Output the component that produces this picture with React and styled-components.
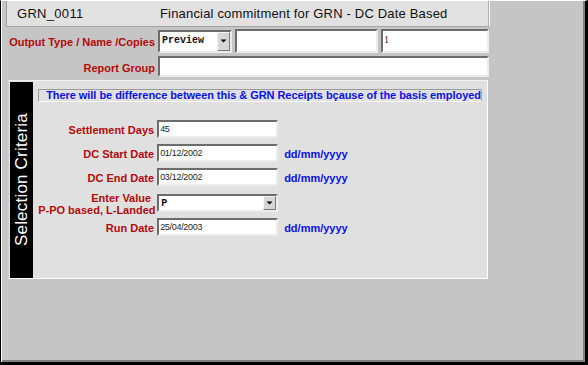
import React from 'react';
import styled, { createGlobalStyle } from 'styled-components';

const Global = createGlobalStyle`
  html, body { margin: 0; padding: 0; background: #c5c5c5; }
  body { font-family: "Liberation Sans", Arial, sans-serif; }
  * { box-sizing: border-box; }
`;

const Window = styled.div`
  width: 588px;
  height: 365px;
  background: #c5c5c5;
  border-top: 1px solid #ffffff;
  border-left: 1px solid #000000;
  border-right: 3px solid #000000;
  border-bottom: 3px solid #000000;
  box-shadow: inset 1px 0 0 #ffffff, inset -2px -2px 0 #808080;
  padding-left: 5px;
  display: flex;
  flex-direction: column;
  align-items: flex-start;
`;

const Header = styled.div`
  width: 484px;
  height: 26px;
  background: #e1e1e1;
  border-left: 1px solid #9c9c9c;
  border-right: 1px solid #f6f6f6;
  border-bottom: 1px solid #a4a4a4;
  box-shadow: inset -1px 0 0 #b0b0b0;
  display: grid;
  grid-template-columns: 143px 1fr;
  align-items: center;
  padding-left: 10px;
  font-size: 13px;
  color: #111111;
`;

const HeaderText = styled.span`
  letter-spacing: ${p => p.$ls || 0}px;
  white-space: nowrap;
`;

const TopRow = styled.div`
  display: grid;
  grid-template-columns: ${p => p.$cols};
  column-gap: 3px;
  align-items: center;
  height: ${p => p.$h}px;
  margin-top: ${p => p.$mt}px;
`;

const Label = styled.div`
  color: #b40a0a;
  font-weight: bold;
  font-size: 11px;
  line-height: ${p => p.$lh || 12}px;
  text-align: right;
  white-space: nowrap;
  padding-top: ${p => p.$pt || 0}px;
  align-self: ${p => p.$self || 'center'};
`;

const Pad = styled.span`
  margin-right: ${p => p.$r}px;
`;

const Field = styled.div`
  height: ${p => p.$h}px;
  width: ${p => p.$w}px;
  background: #ffffff;
  border-top: 2px solid #6c6c6c;
  border-left: 2px solid #6c6c6c;
  border-right: 2px solid #ececec;
  border-bottom: 2px solid #ececec;
  padding: ${p => p.$pt || 2}px 0 0 1px;
  font-family: ${p => p.$font || '"Liberation Sans", Arial, sans-serif'};
  font-size: ${p => p.$fs || 9}px;
  font-weight: ${p => (p.$bold ? 'bold' : 'normal')};
  letter-spacing: ${p => p.$ls || 0}px;
  line-height: 11px;
  color: #262626;
  white-space: nowrap;
  overflow: hidden;
  align-self: ${p => p.$self || 'center'};
  margin-top: ${p => p.$mtop || 0}px;
`;

const SelectBox = styled(Field)`
  display: flex;
  padding: 0;
`;

const SelectValue = styled.div`
  flex: 1;
  padding: ${p => p.$pt}px 0 0 2px;
  font-family: "Liberation Mono", "Courier New", monospace;
  font-size: 10px;
  font-weight: bold;
  color: #111111;
`;

const DropButton = styled.div`
  width: 13px;
  background: #d6d6d6;
  border-top: 1px solid #f4f4f4;
  border-left: 1px solid #f4f4f4;
  border-right: 1px solid #7a7a7a;
  border-bottom: 1px solid #7a7a7a;
  display: flex;
  align-items: center;
  justify-content: center;
`;

const Panel = styled.div`
  margin-top: 3px;
  margin-left: 2px;
  width: 480px;
  height: 199px;
  background: #e0e0e0;
  border-top: 1px solid #f2f2f2;
  border-left: 1px solid #cfcfcf;
  border-right: 1px solid #ffffff;
  border-bottom: 1px solid #ffffff;
  padding: 1px;
  display: flex;
`;

const SideBar = styled.div`
  width: 24px;
  height: 196px;
  background: #000000;
  display: flex;
  align-items: center;
  justify-content: center;
`;

const SideText = styled.span`
  writing-mode: vertical-rl;
  transform: rotate(180deg);
  color: #ffffff;
  font-size: 17px;
  letter-spacing: 0.2px;
  white-space: nowrap;
`;

const PanelBody = styled.div`
  flex: 1;
  padding: 7px 4px 0 5px;
  display: flex;
  flex-direction: column;
`;

const Notice = styled.div`
  height: 13px;
  border-top: 1px solid #9a9a9a;
  border-left: 1px solid #9a9a9a;
  border-right: 1px solid #a8a8a8;
  border-bottom: 1px solid #f8f8f8;
  padding-left: 7px;
  color: #0a12e8;
  font-weight: bold;
  font-size: 11px;
  line-height: 11px;
  white-space: nowrap;
  letter-spacing: -0.05px;
`;

const FieldRow = styled.div`
  display: grid;
  grid-template-columns: 116px 121px auto;
  column-gap: 3px;
  align-items: center;
  margin-top: ${p => p.$mt}px;
`;

const Hint = styled.span`
  color: #0a12e8;
  font-weight: bold;
  font-size: 11px;
  margin-left: 3px;
  padding-top: 2px;
  white-space: nowrap;
`;

const Arrow = () => (
  <svg width="7" height="4" viewBox="0 0 7 4">
    <path d="M0.5 0.5 H6.5 L3.5 3.5 Z" fill="#000" />
  </svg>
);

const serif = '"Liberation Serif", "Times New Roman", serif';

const dateFields = [
  { label: 'Settlement Days', value: '45', mt: 18, hint: false },
  { label: 'DC Start Date', value: '01/12/2002', mt: 6, hint: true },
  { label: 'DC End Date', value: '03/12/2002', mt: 6, hint: true },
];

export default function App() {
  return (
    <>
      <Global />
      <Window>
        <Header>
          <HeaderText $ls={0.3}>GRN_0011</HeaderText>
          <HeaderText $ls={0.18}>Financial commitment for GRN - DC Date Based</HeaderText>
        </Header>

        <TopRow $cols="149px 74px 143px 108px" $h={24} $mt={2}>
          <Label $pt={2}>Output Type / Name /Copies</Label>
          <SelectBox $h={23} $w={74}>
            <SelectValue $pt={3}>Preview</SelectValue>
            <DropButton>
              <Arrow />
            </DropButton>
          </SelectBox>
          <Field $h={24} $w={143} />
          <Field $h={24} $w={108} $font={serif} $fs={10} $pt={3}>1</Field>
        </TopRow>

        <TopRow $cols="149px 331px" $h={21} $mt={3}>
          <Label $pt={2}>Report Group</Label>
          <Field $h={21} $w={331} />
        </TopRow>

        <Panel>
          <SideBar>
            <SideText>Selection Criteria</SideText>
          </SideBar>
          <PanelBody>
            <Notice>There will be difference between this &amp; GRN Receipts bçause of the basis employed</Notice>

            {dateFields.map(f => (
              <FieldRow key={f.label} $mt={f.mt}>
                <Label $pt={2}>{f.label}</Label>
                <Field $h={18} $w={121} $ls={-0.3}>{f.value}</Field>
                {f.hint ? <Hint>dd/mm/yyyy</Hint> : <span />}
              </FieldRow>
            ))}

            <FieldRow $mt={6}>
              <Label $lh={12}>
                <Pad $r={3}>Enter Value</Pad>
                <br />
                P-PO based, L-Landed
              </Label>
              <SelectBox $h={18} $w={121} $self="start" $mtop={2}>
                <SelectValue $pt={2}>P</SelectValue>
                <DropButton>
                  <Arrow />
                </DropButton>
              </SelectBox>
              <span />
            </FieldRow>

            <FieldRow $mt={2}>
              <Label $pt={2}>Run Date</Label>
              <Field $h={18} $w={121} $ls={-0.3}>25/04/2003</Field>
              <Hint>dd/mm/yyyy</Hint>
            </FieldRow>
          </PanelBody>
        </Panel>
      </Window>
    </>
  );
}
